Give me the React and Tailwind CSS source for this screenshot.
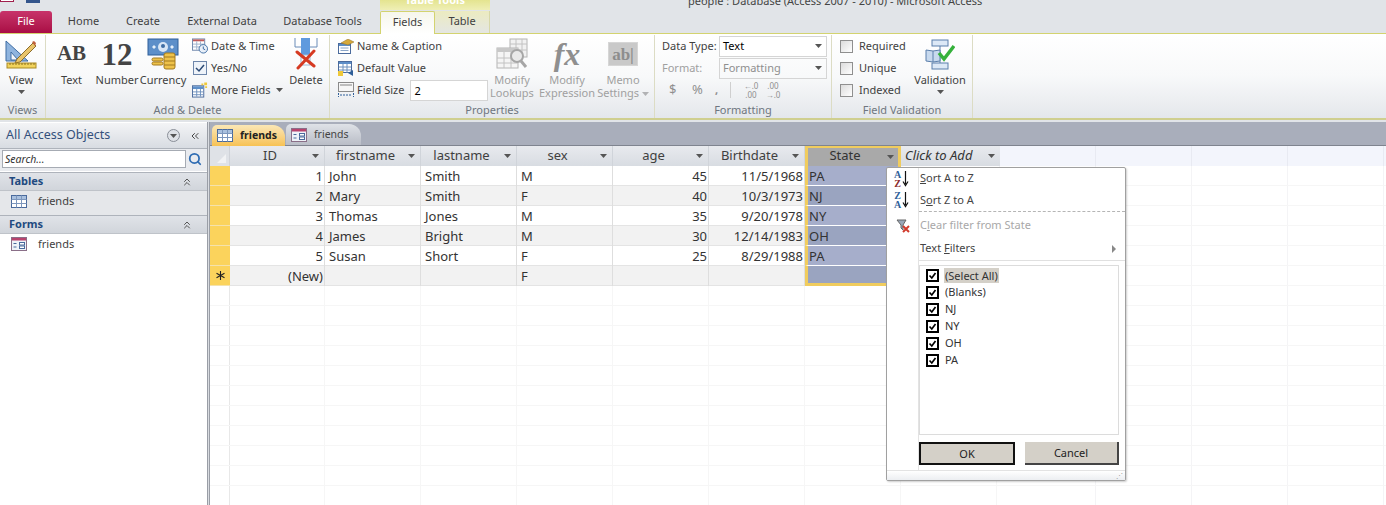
import { ChevronsUp, ChevronsLeft, Search } from "lucide-react";

const Caret = ({ className = "" }) => (
  <svg width="7" height="4" viewBox="0 0 7 4" className={className}>
    <path d="M0 0h7L3.5 4z" fill="#555" />
  </svg>
);

const GridIcon = ({ className = "" }) => (
  <svg width="16" height="13" viewBox="0 0 16 13" className={className}>
    <rect x=".5" y=".5" width="15" height="12" fill="#fff" stroke="#4a6a9c" />
    <path d="M1 1h14v3H1z" fill="#a9c0de" />
    <path d="M.5 4.5h15M.5 8.500h15M5.500 .5v12M10.500 .5v12" stroke="#7d97bd" fill="none" />
  </svg>
);

const FormIcon = ({ className = "" }) => (
  <svg width="16" height="14" viewBox="0 0 16 14" className={className}>
    <rect x=".5" y=".5" width="15" height="13" fill="#eef2f8" stroke="#8a6f88" />
    <path d="M1 1h14v2.500H1z" fill="#b8436e" />
    <path d="M2.500 6.500h3M2.500 10h3" stroke="#4a6a9c" fill="none" />
    <rect x="8.500" y="5.500" width="5" height="2.500" fill="#fff" stroke="#4a6a9c" />
    <rect x="8.500" y="9" width="5" height="2.500" fill="#fff" stroke="#4a6a9c" />
  </svg>
);

const ViewIcon = () => (
  <svg width="32" height="30" viewBox="0 0 32 30">
    <path d="M1 2l22 20H1z" fill="#8fb4de" stroke="#3f6da3" />
    <path d="M6 13l7 8H6z" fill="#f3f6fa" stroke="#3f6da3" />
    <path d="M12 20L28 4l3 3-16 16-5 1z" fill="#e9c46a" stroke="#8c6d2b" />
    <path d="M27 3l2-1 2 2-1 3z" fill="#c0603c" />
    <rect x="2" y="24" width="29" height="5" fill="#f2d35c" stroke="#a98a25" />
    <path d="M5 24v2M8 24v2M11 24v2M14 24v2M17 24v2M20 24v2M23 24v2M26 24v2M29 24v2" stroke="#8c7320" />
  </svg>
);

const CurrencyIcon = () => (
  <svg width="32" height="32" viewBox="0 0 32 32">
    <rect x="1" y="1" width="30" height="16" fill="#5d8fc9" stroke="#2f5f99" />
    <circle cx="16" cy="9" r="5" fill="#d8e6f6" />
    <circle cx="16" cy="8" r="2" fill="#3f6da3" />
    <path d="M5 9l2-2 2 2-2 2zM23 9l2-2 2 2-2 2z" fill="#e6f0fa" />
    <rect x="5" y="20" width="11" height="3" rx="1.500" fill="#eec24a" stroke="#a37a1e" />
    <rect x="5" y="24" width="11" height="3" rx="1.500" fill="#eec24a" stroke="#a37a1e" />
    <rect x="17" y="15" width="11" height="16" rx="2" fill="#eec24a" stroke="#a37a1e" />
    <path d="M17 19h11M17 23h11M17 27h11" stroke="#a37a1e" />
  </svg>
);

const DeleteIcon = () => (
  <svg width="24" height="32" viewBox="0 0 24 32">
    <path d="M1 0v9h22V0" fill="none" stroke="#6a8cb8" strokeWidth="1" />
    <rect x="7" y="0" width="9" height="17" fill="#5f9ade" />
    <rect x="7" y="17" width="9" height="10" fill="#fff" stroke="#9fb5d1" />
    <path d="M3 14l17 14M20 13L4 30" stroke="#d63a22" strokeWidth="3" strokeLinecap="round" />
  </svg>
);

const LookupsIcon = () => (
  <svg width="32" height="32" viewBox="0 0 32 32">
    <rect x="14" y="1" width="17" height="18" fill="#f1f1f1" stroke="#b4b4b4" />
    <path d="M14 6h17M14 12h17M20 1v18M26 1v18" stroke="#c2c2c2" />
    <rect x="1" y="10" width="21" height="20" fill="#f5f5f5" stroke="#b4b4b4" />
    <path d="M1 10h21v4H1z" fill="#c8c8c8" />
    <path d="M1 20h21M1 25h21M8 14v16M15 14v16" stroke="#c2c2c2" />
    <circle cx="21" cy="18" r="6" fill="#e9e9e9" stroke="#a6a6a6" strokeWidth="2" />
    <path d="M25 23l5 6" stroke="#a6a6a6" strokeWidth="3" />
  </svg>
);

const MemoIcon = () => (
  <div className="w-[30px] h-[24px] bg-[#c9c9c9] border border-[#d6d6d6] flex items-center justify-center">
    <span className="font-['Liberation_Serif',serif] font-bold text-[17px] text-[#8d8d8d] leading-none">ab|</span>
  </div>
);

const ValidationIcon = () => (
  <svg width="30" height="31" viewBox="0 0 30 31">
    <rect x="7" y="1" width="16" height="6" fill="#dce8f6" stroke="#5b7fab" />
    <rect x="7" y="24" width="16" height="6" fill="#dce8f6" stroke="#5b7fab" />
    <path d="M15 7v17" stroke="#5b7fab" />
    <path d="M1 11l7 1 7-1v11l-7 1-7-1z" fill="#c7d9ee" stroke="#5b7fab" />
    <path d="M8 12v11" stroke="#5b7fab" />
    <path d="M14 14l5 6L29 7" fill="none" stroke="#35b13b" strokeWidth="3.500" />
  </svg>
);

const DateIcon = () => (
  <svg width="17" height="16" viewBox="0 0 17 16">
    <rect x=".5" y=".5" width="13" height="12" fill="#fff" stroke="#6d86aa" />
    <path d="M1 1h12v2H1z" fill="#c05a5a" />
    <path d="M1 6h12M1 9h12M5 3v9M9 3v9" stroke="#9fb2cc" />
    <circle cx="12" cy="11" r="4.500" fill="#e8eff8" stroke="#3f6da3" />
    <path d="M12 8.500V11l2 1" stroke="#2f5f99" fill="none" />
  </svg>
);

const YesNoIcon = () => (
  <svg width="14" height="14" viewBox="0 0 14 14">
    <rect x=".5" y=".5" width="13" height="13" fill="#eef3f9" stroke="#6d86aa" />
    <path d="M3 7l3 3 5-6" fill="none" stroke="#2b4a75" strokeWidth="1.500" />
  </svg>
);

const MoreFieldsIcon = () => (
  <svg width="17" height="16" viewBox="0 0 17 16">
    <rect x=".5" y="3.500" width="12" height="12" fill="#fff" stroke="#4a6a9c" />
    <path d="M1 4h11v3H1z" fill="#5d8fc9" />
    <path d="M1 10h11M1 13h11M5 7v8M9 7v8" stroke="#6d90bd" />
    <path d="M13 0h3v3h-3zM10 1h2v2h-2zM14 4h2v2h-2z" fill="#efc93a" />
  </svg>
);

const CaptionIcon = () => (
  <svg width="16" height="15" viewBox="0 0 16 15">
    <rect x=".5" y="4.500" width="12" height="10" fill="#fff" stroke="#4a6a9c" />
    <path d="M1 5h11v2H1z" fill="#5d8fc9" />
    <path d="M2.500 9h8M2.500 11.500h8" stroke="#8aa5c8" />
    <path d="M3 4l7-4 6 3-6 3z" fill="#d6a93a" stroke="#8c6d2b" strokeWidth=".5" />
  </svg>
);

const DefaultIcon = () => (
  <svg width="16" height="15" viewBox="0 0 16 15">
    <rect x=".5" y=".5" width="13" height="11" fill="#fff" stroke="#4a6a9c" />
    <path d="M1 1h12v2H1z" fill="#5d8fc9" />
    <path d="M1 6h12M1 9h12M5 3v9M9 3v9" stroke="#6d90bd" />
    <rect x="0" y="10" width="5" height="5" fill="#efc93a" />
    <path d="M10 12l5-3v6z" fill="#2f5f99" />
  </svg>
);

const SizeIcon = () => (
  <svg width="16" height="16" viewBox="0 0 16 16">
    <rect x=".5" y=".5" width="15" height="9" fill="#f6f6f6" stroke="#8a8a8a" />
    <rect x="2" y="2" width="12" height="2" fill="#bdbdbd" />
    <path d="M.5 11v4M15.500 11v4M2 13h12" stroke="#2f5f99" strokeDasharray="2 1" fill="none" />
  </svg>
);

const BigButton = ({ label, icon, width, disabled, caret }) => (
  <div className={`flex flex-col items-center shrink-0 ${width} ${disabled ? "text-[#a0a0a0]" : "text-[#3f3f3f]"}`}>
    <div className="h-[38px] flex items-center justify-center">{icon}</div>
    <div className="leading-[13px] text-center whitespace-pre">{label}</div>
    {caret && <Caret className="mt-[4px]" />}
  </div>
);

const SmallButton = ({ icon, label, tail }) => (
  <div className="h-[22px] flex items-center gap-[3px] whitespace-nowrap text-[#3f3f3f]">
    <div className="w-[16px] flex justify-center">{icon}</div>
    {label}
    {tail}
  </div>
);

const Group = ({ label, width, children, className = "" }) => (
  <div className={`${width} shrink-0 flex flex-col border-r border-[#dcdcc4] bg-gradient-to-b from-white via-[#f8f9fa] to-[#e4e7eb]`}>
    <div className={`h-[68px] flex ${className}`}>{children}</div>
    <div className="h-[14px] leading-[14px] text-center text-[#6f7680]">{label}</div>
  </div>
);

const Ribbon = () => (
  <div className="flex h-[87px] border-t border-b-2 border-t-[#d3d36f] border-b-[#cfcf8f] bg-gradient-to-b from-white via-[#f8f9fa] to-[#e4e7eb] pt-[1px]">
    <Group label="Views" width="w-[46px]">
      <BigButton width="w-[42px]" label="View" icon={<ViewIcon />} caret />
    </Group>
    <Group label="Add & Delete" width="w-[284px]" className="pl-[2px]">
      <BigButton width="w-[47px]" label="Text" icon={<span className="font-['Liberation_Serif',serif] font-bold text-[21px] text-[#444]">AB</span>} />
      <BigButton width="w-[44px]" label="Number" icon={<span className="font-['Liberation_Serif',serif] font-bold text-[31px] leading-none text-[#444]">12</span>} />
      <BigButton width="w-[48px]" label="Currency" icon={<CurrencyIcon />} />
      <div className="w-[92px] ml-[5px] flex flex-col shrink-0">
        <SmallButton icon={<DateIcon />} label="Date & Time" />
        <SmallButton icon={<YesNoIcon />} label="Yes/No" />
        <SmallButton icon={<MoreFieldsIcon />} label="More Fields" tail={<Caret className="ml-[2px]" />} />
      </div>
      <BigButton width="w-[44px]" label="Delete" icon={<DeleteIcon />} />
    </Group>
    <Group label="Properties" width="w-[325px]" className="pl-[8px]">
      <div className="w-[150px] flex flex-col shrink-0">
        <SmallButton icon={<CaptionIcon />} label="Name & Caption" />
        <SmallButton icon={<DefaultIcon />} label="Default Value" />
        <div className="h-[22px] flex items-center gap-[3px] text-[#3f3f3f] whitespace-nowrap">
          <div className="w-[16px] flex justify-center"><SizeIcon /></div>
          Field Size
          <div className="w-[78px] h-[21px] ml-[3px] pl-[3px] border border-[#d5d5d5] bg-white leading-[19px] text-black">2</div>
        </div>
      </div>
      <BigButton width="w-[48px]" disabled label={"Modify\nLookups"} icon={<LookupsIcon />} />
      <BigButton width="w-[62px]" disabled label={"Modify\nExpression"} icon={<span className="font-['Liberation_Serif',serif] italic font-bold text-[32px] leading-none text-[#8f8f8f]">fx</span>} />
      <BigButton width="w-[50px]" disabled label={<>Memo{"\n"}Settings <Caret className="inline opacity-40" /></>} icon={<MemoIcon />} />
    </Group>
    <Group label="Formatting" width="w-[177px]" className="pl-[7px] flex-col">
      <div className="h-[22px] flex items-center text-[#3f3f3f]">
        <span className="w-[57px]">Data Type:</span>
        <div className="w-[108px] h-[21px] pl-[3px] pr-[4px] border border-[#d5d5d5] bg-white flex items-center justify-between text-black">Text<Caret /></div>
      </div>
      <div className="h-[22px] flex items-center text-[#a0a0a0]">
        <span className="w-[57px]">Format:</span>
        <div className="w-[108px] h-[21px] pl-[3px] pr-[4px] border border-[#d5d5d5] flex items-center justify-between text-[#8f8f8f]">Formatting<Caret /></div>
      </div>
      <div className="h-[22px] flex items-center text-[#8f8f8f] pl-[7px]">
        <span className="w-[23px] text-[13px]">$</span>
        <span className="w-[23px] text-[13px]">%</span>
        <span className="w-[15px] font-bold">,</span>
        <span className="w-[1px] h-[16px] bg-[#cfcfcf] mr-[9px]"></span>
        <span className="w-[22px] text-[8px] leading-[9px] text-center">←.0<br />.00</span>
        <span className="w-[22px] text-[8px] leading-[9px] text-center">.00<br />→.0</span>
      </div>
    </Group>
    <Group label="Field Validation" width="w-[141px]" className="pl-[8px]">
      <div className="w-[72px] flex flex-col shrink-0 text-[#3f3f3f]">
        {["Required", "Unique", "Indexed"].map((name) => (
          <div key={name} className="h-[22px] flex items-center gap-[6px]">
            <span className="w-[13px] h-[13px] border border-[#8f8f8f] bg-gradient-to-br from-[#dcdcdc] to-white"></span>
            {name}
          </div>
        ))}
      </div>
      <BigButton width="w-[56px]" label="Validation" icon={<ValidationIcon />} caret />
    </Group>
  </div>
);

const TopBar = () => (
  <div className="h-[33px] relative bg-[#e1e4e8] flex flex-col">
    <div className="h-[10px] overflow-hidden flex">
      <div className="w-[380px] shrink-0 flex gap-[8px] items-start">
        <span className="w-[14px] h-[2px] border-x border-b border-[#a0204e] bg-white"></span>
        <span className="w-[14px] h-[3px] bg-[#33558c] ml-[4px]"></span>
      </div>
      <div className="w-[110px] shrink-0 bg-gradient-to-b from-[#e4e48f] to-[#efefb5] text-center text-white font-bold leading-[12px] overflow-hidden">
        <div className="-mt-[6px]">Table Tools</div>
      </div>
      <div className="ml-[198px] -mt-[7px] text-[#444] whitespace-nowrap">people : Database (Access 2007 - 2010)  -  Microsoft Access</div>
    </div>
    <div className="h-[23px] flex items-end text-[#3f3f3f]">
      <div className="w-[52px] h-[22px] rounded-t-[3px] bg-gradient-to-b from-[#c8336a] to-[#a90b45] text-white text-center leading-[19px]">File</div>
      <div className="w-[63px] h-[22px] text-center leading-[19px]">Home</div>
      <div className="w-[56px] h-[22px] text-center leading-[19px]">Create</div>
      <div className="w-[102px] h-[22px] text-center leading-[19px]">External Data</div>
      <div className="w-[99px] h-[22px] text-center leading-[19px]">Database Tools</div>
      <div className="w-[8px]"></div>
      <div className="w-[55px] h-[23px] -mb-[1px] relative z-10 border-x border-t border-[#d3d36f] rounded-t-[2px] bg-gradient-to-b from-[#f6f6ec] to-white text-center leading-[19px]">Fields</div>
      <div className="w-[55px] h-[22px] bg-gradient-to-b from-[#ecebc0] to-[#e4e6e2] text-center leading-[19px] border-r border-[#d8d8a8]">Table</div>
    </div>
  </div>
);

const NavPane = () => (
  <div className="w-[207px] shrink-0 bg-white flex flex-col">
    <div className="h-[25px] mt-[1px] bg-gradient-to-b from-[#f3f4f6] to-[#d8dce2] flex items-center pl-[6px] pr-[6px] text-[12.5px] text-[#33507c] justify-between">
      <span>All Access Objects</span>
      <div className="flex items-center gap-[9px]">
        <span className="w-[13px] h-[13px] rounded-full border border-[#8a8f98] bg-[#dfe2e7] flex items-center justify-center"><Caret /></span>
        <ChevronsLeft size={12} color="#444" />
      </div>
    </div>
    <div className="h-[23px] bg-[#e9ebef] border-t border-[#aeb3bb] flex items-start pt-[1px] pl-[2px] pr-[5px] gap-[2px]">
      <div className="flex-1 h-[18px] bg-white border border-[#a6abb3] pl-[2px] italic text-[#333] leading-[16px] text-[10.5px]">Search...</div>
      <Search size={14} color="#2f6cb3" strokeWidth={3} className="mt-[2px]" />
    </div>
    <div className="h-[19px] mt-[1px] bg-gradient-to-b from-[#e0e3e8] to-[#d1d5db] border-t border-[#aeb3bb] border-b border-b-[#bfc3c9] flex items-center justify-between pl-[9px] pr-[14px] font-bold text-[#1f4a80]">
      Tables<ChevronsUp size={12} color="#555" />
    </div>
    <div className="h-[24px] pb-[4px] bg-[#e5e7ea] flex items-center pl-[11px] gap-[11px] text-[#3f3f3f]"><GridIcon />friends</div>
    <div className="h-[19px] bg-gradient-to-b from-[#e0e3e8] to-[#d1d5db] border-t border-[#aeb3bb] border-b border-b-[#bfc3c9] flex items-center justify-between pl-[9px] pr-[14px] font-bold text-[#1f4a80]">
      Forms<ChevronsUp size={12} color="#555" />
    </div>
    <div className="h-[24px] pb-[4px] flex items-center pl-[11px] gap-[11px] text-[#3f3f3f]"><FormIcon />friends</div>
  </div>
);

const columns = [
  { name: "ID", w: "w-[95px]" },
  { name: "firstname", w: "w-[96px]" },
  { name: "lastname", w: "w-[96px]" },
  { name: "sex", w: "w-[96px]" },
  { name: "age", w: "w-[96px]" },
  { name: "Birthdate", w: "w-[96px]" },
];

const rows = [
  ["1", "John", "Smith", "M", "45", "11/5/1968", "PA"],
  ["2", "Mary", "Smith", "F", "40", "10/3/1973", "NJ"],
  ["3", "Thomas", "Jones", "M", "35", "9/20/1978", "NY"],
  ["4", "James", "Bright", "M", "30", "12/14/1983", "OH"],
  ["5", "Susan", "Short", "F", "25", "8/29/1988", "PA"],
  ["(New)", "", "", "F", "", "", ""],
];

const HeaderCell = ({ name, w }) => (
  <div className={`${w} shrink-0 h-[20px] relative border-r border-[#d0d4da] bg-gradient-to-b from-[#e8eaee] to-[#d8dce2] text-center text-[13px] leading-[19px] text-[#3f3f3f] pr-[14px]`}>
    {name}
    <Caret className="absolute right-[5px] top-[8px]" />
  </div>
);

const Cell = ({ w, right, children }) => (
  <div className={`${w} shrink-0 h-[20px] border-r border-[#dedede] text-[13px] leading-[21px] text-[#333] ${right ? "text-right pr-[1px]" : "pl-[4px]"}`}>
    {children}
  </div>
);

// empty columns to the right of the table, only faint lines
const Filler = ({ className = "" }) => (
  <>
    <div className={`w-[99px] shrink-0 border-r border-[#f4f4f6] ${className}`}></div>
    {[0, 1, 2, 3].map((c) => (
      <div key={c} className={`w-[96px] shrink-0 border-r border-[#f4f4f6] ${className}`}></div>
    ))}
  </>
);

const Datasheet = () => (
  <div className="flex-1 flex flex-col min-w-0 relative">
    <div className="h-[24px] bg-[#a9aebb] border-b border-[#7f848f] flex items-end pl-[2px]">
      <div className="w-[73px] h-[21px] rounded-t-[5px] rounded-tr-[12px] -mb-[1px] bg-gradient-to-b from-[#fbe7b5] to-[#f7c253] flex items-center gap-[7px] pl-[5px] text-[10.5px] font-bold text-[#222]">
        <GridIcon />friends
      </div>
      <div className="w-[75px] h-[21px] ml-[1px] rounded-t-[5px] rounded-tr-[12px] bg-gradient-to-b from-[#dfe2e7] to-[#b9bdc7] flex items-center gap-[7px] pl-[5px] text-[10.5px] text-[#444]">
        <FormIcon />friends
      </div>
    </div>
    <div className="flex h-[20px]">
      <div className="w-[20px] shrink-0 bg-[#dfe2e7] border-r border-[#cfd2d8] relative">
        <div className="absolute right-[3px] bottom-[3px] w-0 h-0 border-l-[9px] border-l-transparent border-b-[9px] border-b-[#f1f2f4]"></div>
      </div>
      {columns.map((c) => <HeaderCell key={c.name} {...c} />)}
      <div className="w-[96px] shrink-0 h-[20px] relative bg-[#a9a9a9] border-x-[3px] border-t-[2px] border-[#f0cc5e] text-center text-[13px] leading-[15px] text-[#333] pr-[16px]">
        State<Caret className="absolute right-[4px] top-[7px]" />
      </div>
      <div className="w-[99px] shrink-0 h-[20px] relative bg-gradient-to-b from-[#e8eaee] to-[#d8dce2] pl-[4px] italic text-[13px] leading-[19px] text-[#333]">
        Click to Add<Caret className="absolute left-[87px] top-[8px]" />
      </div>
      <div className="flex-1 flex bg-[#f3f5fc] overflow-hidden">
        {[0, 1, 2, 3].map((c) => (
          <div key={c} className="w-[96px] shrink-0 border-r border-[#e8eaf2]"></div>
        ))}
      </div>
    </div>
    {rows.map((row, i) => (
      <div key={i} className={`flex h-[20px] ${i % 2 === 1 ? "bg-[#f2f2f2]" : "bg-white"}`}>
        <div className="w-[20px] shrink-0 bg-[#fbd35c] border-b border-[#f4e2ac] flex items-center justify-center">
          {i === 5 && (
            <svg width="9" height="9" viewBox="0 0 9 9">
              <path d="M4.500 0v9M.5 2.200l8 4.600M8.500 2.200l-8 4.600" stroke="#222" strokeWidth="1.100" />
            </svg>
          )}
        </div>
        <div className="flex border-b border-[#e4e4e4]">
          <Cell w="w-[95px]" right>{row[0]}</Cell>
          <Cell w="w-[96px]">{row[1]}</Cell>
          <Cell w="w-[96px]">{row[2]}</Cell>
          <Cell w="w-[96px]">{row[3]}</Cell>
          <Cell w="w-[96px]" right>{row[4]}</Cell>
          <Cell w="w-[96px]" right>{row[5]}</Cell>
        </div>
        <div className={`w-[96px] shrink-0 h-[20px] border-x-[3px] border-[#f0cc5e] pl-[1px] text-[13px] leading-[21px] text-[#333] ${i === 5 ? "border-b-[3px] border-b-[#f0cc5e]" : "border-b border-b-white"} ${i % 2 === 1 ? "bg-[#9aa4c0]" : "bg-[#a6aecb]"}`}>{row[6]}</div>
        <div className="flex-1 flex bg-white border-b border-[#f6f6f6] overflow-hidden"><Filler /></div>
      </div>
    ))}
    <EmptyGrid />
    <FilterMenu />
  </div>
);

// faint lines of the empty sheet below the data
const EmptyGrid = () => (
  <div className="flex-1 overflow-hidden bg-white flex flex-col">
    {Array.from({ length: 11 }).map((_, r) => (
      <div key={r} className="flex h-[20px] shrink-0 border-b border-[#f6f6f6]">
        <div className="w-[20px] shrink-0 border-r border-[#e8e8e8]"></div>
        <div className="w-[95px] shrink-0 border-r border-[#f6f6f6]"></div>
        {[0, 1, 2, 3, 4, 5, 6].map((c) => (
          <div key={c} className="w-[96px] shrink-0 border-r border-[#f6f6f6]"></div>
        ))}
        <Filler />
      </div>
    ))}
  </div>
);

const AzIcon = ({ top, bottom }) => (
  <div className="w-[18px] h-[20px] flex items-center font-['Liberation_Serif',serif] font-bold text-[10px] leading-[9px]">
    <div className="flex flex-col items-center">
      <span className="text-[#2f5f99]">{top}</span>
      <span className={top === "A" ? "text-[#8c2b2b]" : "text-[#2f5f99]"}>{bottom}</span>
    </div>
    <svg width="7" height="16" viewBox="0 0 7 16" className="ml-[1px]">
      <path d="M3.500 0v13M1 10.500l2.500 4 2.500-4" stroke="#111" fill="none" strokeWidth="1.200" />
    </svg>
  </div>
);

const MenuRow = ({ h, left, children }) => (
  <div className={`${h} flex items-center`}>
    <div className="w-[32px] shrink-0 flex justify-center">{left}</div>
    {children}
  </div>
);

const FilterMenu = () => (
  <div className="absolute left-[676px] top-[45px] w-[240px] h-[314px] bg-white border border-[#a0a0a0] rounded-[2px] shadow-[1px_1px_2px_rgba(0,0,0,0.2)] flex flex-col text-[11px] text-[#444]">
    <div className="flex-1 flex relative">
      <div className="absolute left-[31px] top-0 bottom-0 border-l border-[#e3e3e3]"></div>
      <div className="flex-1 flex flex-col min-w-0">
        <MenuRow h="h-[21px]" left={<AzIcon top="A" bottom="Z" />}><span className="ml-[1px]"><u>S</u>ort A to Z</span></MenuRow>
        <MenuRow h="h-[22px]" left={<AzIcon top="Z" bottom="A" />}><span className="ml-[1px]">S<u>o</u>rt Z to A</span></MenuRow>
        <div className="ml-[32px] border-t border-dashed border-[#b5b5b5]"></div>
        <MenuRow h="h-[26px] pt-[1px]" left={
          <svg width="14" height="14" viewBox="0 0 14 14">
            <path d="M1 1h9L7 6v5L5 9V6z" fill="#9aa7b8" stroke="#666" />
            <path d="M7 7l6 6M13 7l-6 6" stroke="#d13b2c" strokeWidth="2" />
          </svg>
        }><span className="ml-[1px] text-[#a8a8a8]">C<u>l</u>ear filter from State</span></MenuRow>
        <MenuRow h="h-[21px]">
          <span className="ml-[1px] flex-1">Text <u>F</u>ilters</span>
          <span className="w-0 h-0 mr-[9px] border-y-[4px] border-y-transparent border-l-[4px] border-l-[#888]"></span>
        </MenuRow>
        <div className="ml-[32px] border-t border-[#e0e0e0] mt-[1px]"></div>
        <div className="ml-[32px] mr-[6px] mt-[4px] h-[170px] border border-[#dcdcdc] pt-[1px] pl-[6px] flex flex-col">
          {["(Select All)", "(Blanks)", "NJ", "NY", "OH", "PA"].map((v, i) => (
            <div key={v} className="h-[17px] flex items-center gap-[5px] text-[#333] shrink-0">
              <svg width="13" height="13" viewBox="0 0 13 13">
                <rect x="1" y="1" width="11" height="11" fill="#fff" stroke="#000" strokeWidth="2" />
                <path d="M3.500 6.500l2.300 2.500 3.700-5" fill="none" stroke="#000" strokeWidth="1.700" />
              </svg>
              <span className={i === 0 ? "bg-[#d4d0c8] px-[1px] h-[15px] leading-[15px]" : "px-[1px]"}>{v}</span>
            </div>
          ))}
        </div>
        <div className="ml-[32px] mr-[6px] mt-[7px] flex justify-between text-[#222]">
          <div className="w-[96px] h-[23px] bg-[#d4d0c8] border-2 border-[#111] text-center leading-[19px]">OK</div>
          <div className="w-[94px] h-[23px] bg-[#d4d0c8] border-r-2 border-b-2 border-[#444] text-center leading-[22px]">Cancel</div>
        </div>
      </div>
    </div>
    <div className="h-[10px] bg-gradient-to-b from-white to-[#eceef1] border-t border-[#e3e3e3] flex justify-end items-end pr-[2px] pb-[1px]">
      <span className="text-[7px] leading-[7px] text-[#999]">⋰</span>
    </div>
  </div>
);

export default function App() {
  return (
    <div className="w-[1386px] h-[505px] overflow-hidden flex flex-col bg-white font-['Noto_Sans',sans-serif] text-[11px]">
      <TopBar />
      <Ribbon />
      <div className="h-[2px] bg-[#e1e4e8]"></div>
      <div className="flex-1 flex min-h-0">
        <NavPane />
        <div className="w-[3px] shrink-0 bg-[#d9dce1] border-x border-[#9a9ea6]"></div>
        <Datasheet />
      </div>
    </div>
  );
}
